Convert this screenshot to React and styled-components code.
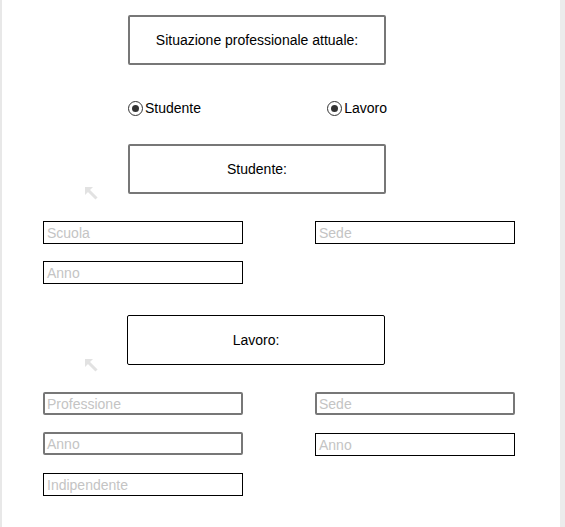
import styled, { createGlobalStyle } from "styled-components";

const GlobalStyle = createGlobalStyle`
  * { box-sizing: border-box; }
  body {
    margin: 0;
    background: #fff;
    font-family: "Liberation Sans", Arial, sans-serif;
  }
`;

const Page = styled.div`
  width: 565px;
  height: 527px;
  background: #fff;
  border-left: 2px solid #e8e8e8;
  border-right: 5px solid #ececec;
  padding-top: 15px;
  display: flex;
  flex-direction: column;
  overflow: hidden;
`;

const TitleBox = styled.div`
  width: 258px;
  height: 50px;
  margin-left: ${(p) => p.$left}px;
  border: ${(p) => (p.$dark ? "1px solid #000" : "2px solid #777")};
  border-radius: 2px;
  display: flex;
  align-items: center;
  justify-content: center;
  font-size: 14px;
  color: #000;
`;

const RadioRow = styled.div`
  margin: 35px 0 0 126px;
  width: 259px;
  height: 16px;
  display: flex;
  justify-content: space-between;
  align-items: center;
`;

const Radio = styled.label`
  display: flex;
  align-items: center;
  gap: 2px;
  font-size: 14px;
  color: #000;
`;

const Dot = styled.span`
  width: 15px;
  height: 15px;
  border: 1.5px solid #333;
  border-radius: 50%;
  display: flex;
  align-items: center;
  justify-content: center;
  &::after {
    content: "";
    width: 7px;
    height: 7px;
    border-radius: 50%;
    background: #333;
  }
`;

const SectionHead = styled.div`
  margin: ${(p) => p.$top}px 0 0 82px;
  display: flex;
  align-items: flex-end;
  gap: ${(p) => p.$gap}px;
`;

const Arrow = styled.svg`
  width: 14px;
  height: 14px;
  margin-bottom: -${(p) => p.$drop}px;
  flex: none;
`;

const Fields = styled.div`
  margin: 27px 0 0 41px;
  display: grid;
  grid-template-columns: 200px 200px;
  column-gap: 72px;
  row-gap: 17px;
`;

const Field = styled.div`
  width: 200px;
  height: 23px;
  border: ${(p) => (p.$soft ? "2px solid #777" : "1px solid #000")};
  border-radius: ${(p) => (p.$soft ? "2px" : "0")};
  padding-left: ${(p) => (p.$soft ? "2px" : "3px")};
  display: flex;
  align-items: center;
  font-size: 14px;
  color: #c4c4c4;
  margin-top: ${(p) => p.$shift || 0}px;
`;

const UpLeft = ({ drop }) => (
  <Arrow viewBox="0 0 14 14" $drop={drop}>
    <path d="M1 1 H9 L1 9 Z" fill="#e2e2e2" />
    <path d="M4 4 L12.5 12.5" stroke="#e2e2e2" strokeWidth="3" />
  </Arrow>
);

const App = () => {
  return (
    <>
      <GlobalStyle />
      <Page>
        <TitleBox $left={126}>Situazione professionale attuale:</TitleBox>

        <RadioRow>
          <Radio>
            <Dot />
            Studente
          </Radio>
          <Radio>
            <Dot />
            Lavoro
          </Radio>
        </RadioRow>

        <SectionHead $top={28} $gap={30}>
          <UpLeft drop={6} />
          <TitleBox $left={0}>Studente:</TitleBox>
        </SectionHead>

        <Fields>
          <Field>Scuola</Field>
          <Field>Sede</Field>
          <Field>Anno</Field>
        </Fields>

        <SectionHead $top={31} $gap={29}>
          <UpLeft drop={7} />
          <TitleBox $left={0} $dark>
            Lavoro:
          </TitleBox>
        </SectionHead>

        <Fields>
          <Field $soft>Professione</Field>
          <Field $soft>Sede</Field>
          <Field $soft>Anno</Field>
          <Field $shift={1}>Anno</Field>
          <Field>Indipendente</Field>
        </Fields>
      </Page>
    </>
  );
};

export default App;
